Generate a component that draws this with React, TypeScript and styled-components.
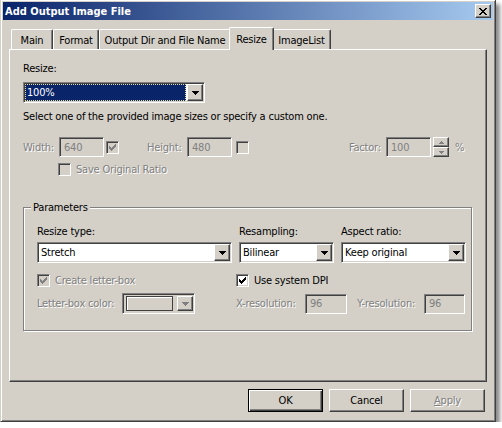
import styled, { createGlobalStyle, css } from "styled-components";

const GlobalStyle = createGlobalStyle`
  html, body {
    margin: 0;
    padding: 0;
    background: #ffffff;
  }
  body {
    font-family: Tahoma, "DejaVu Sans Condensed", "DejaVu Sans", sans-serif;
    font-size: 11px;
    line-height: 13px;
    letter-spacing: -0.2px;
    color: #000000;
  }
  * {
    box-sizing: border-box;
  }
`;

const raised = css`
  background: #d4d0c8;
  border: 1px solid;
  border-color: #ffffff #404040 #404040 #ffffff;
  box-shadow: inset -1px -1px 0 #808080;
`;

const sunken = css`
  border: 1px solid;
  border-color: #808080 #ffffff #ffffff #808080;
  box-shadow: inset 1px 1px 0 #404040, inset -1px -1px 0 #d4d0c8;
`;

const Window = styled.div`
  width: 496px;
  height: 422px;
  background: #d4d0c8;
  border: 1px solid;
  border-color: #d4d0c8 #404040 #404040 #d4d0c8;
  border-top: 0;
  box-shadow: inset 1px 1px 0 #ffffff, inset -1px -1px 0 #808080,
    4px 4px 4px rgba(0, 0, 0, 0.45);
  padding: 2px;
  display: flex;
  flex-direction: column;
`;

const TitleBar = styled.div`
  height: 18px;
  background: linear-gradient(to right, #0a246a, #a6caf0);
  display: flex;
  align-items: center;
  justify-content: space-between;
  padding: 0 2px 0 2px;
  color: #ffffff;
  font-weight: bold;
  letter-spacing: 0;
`;

const CloseButton = styled.div`
  ${raised};
  width: 16px;
  height: 14px;
  display: flex;
  align-items: center;
  justify-content: center;
`;

const Body = styled.div`
  padding: 7px 6px 0 6px;
  display: flex;
  flex-direction: column;
`;

const TabStrip = styled.div`
  height: 22px;
  display: flex;
  align-items: flex-end;
  padding-left: 2px;
`;

const Tab = styled.div<{ $w: number; $active?: boolean }>`
  flex-shrink: 0;
  width: ${(p) => p.$w}px;
  height: 20px;
  display: flex;
  align-items: center;
  justify-content: center;
  padding-top: 2px;
  background: #d4d0c8;
  border-left: 1px solid #ffffff;
  border-top: 1px solid #ffffff;
  border-right: 1px solid #404040;
  border-top-left-radius: 2px;
  border-top-right-radius: 2px;
  box-shadow: inset -1px 0 0 #808080;
  white-space: nowrap;
  ${(p) =>
    p.$active &&
    css`
      width: ${p.$w + 4}px;
      height: 23px;
      margin: 0 -2px -1px;
      padding-top: 0;
      position: relative;
      z-index: 1;
    `}
`;

const Panel = styled.div`
  width: 478px;
  height: 333px;
  border: 1px solid;
  border-color: #ffffff #404040 #404040 #ffffff;
  box-shadow: inset -1px -1px 0 #808080;
  padding: 12px 14px 0 13px;
  display: flex;
  flex-direction: column;
`;

const Label = styled.span<{ $disabled?: boolean; $w?: number }>`
  flex-shrink: 0;
  white-space: nowrap;
  ${(p) => p.$w !== undefined && `width: ${p.$w}px;`}
  color: ${(p) => (p.$disabled ? "#808080" : "#000000")};
  text-shadow: ${(p) => (p.$disabled ? "1px 1px 0 #ffffff" : "none")};
`;

const Combo = styled.div<{ $w?: number }>`
  ${sunken};
  width: ${(p) => (p.$w ? `${p.$w}px` : "100%")};
  height: 21px;
  background: #ffffff;
  padding: 1px;
  display: flex;
  align-items: stretch;
`;

const ComboValue = styled.div<{ $selected?: boolean }>`
  flex: 1;
  display: flex;
  align-items: center;
  padding-left: 2px;
  ${(p) =>
    p.$selected &&
    css`
      background: #0a246a;
      color: #ffffff;
      outline: 1px dotted #e8e0a0;
      outline-offset: -1px;
      margin-right: 1px;
    `}
`;

const DropButton = styled.div`
  ${raised};
  width: 16px;
  flex-shrink: 0;
  display: flex;
  align-items: center;
  justify-content: center;
`;

const Description = styled.div`
  margin-top: 7px;
`;

const Row = styled.div<{ $mt?: number; $h?: number }>`
  display: flex;
  align-items: center;
  margin-top: ${(p) => p.$mt ?? 0}px;
  height: ${(p) => p.$h ?? 13}px;
`;

const Spacer = styled.span<{ $w: number }>`
  flex-shrink: 0;
  width: ${(p) => p.$w}px;
`;

const Field = styled.div<{ $w: number }>`
  ${sunken};
  flex-shrink: 0;
  width: ${(p) => p.$w}px;
  height: 20px;
  background: #d4d0c8;
  color: #808080;
  padding-left: 4px;
  display: flex;
  align-items: center;
`;

const Box = styled.span<{ $disabled?: boolean }>`
  ${sunken};
  flex-shrink: 0;
  width: 13px;
  height: 13px;
  background: ${(p) => (p.$disabled ? "#d4d0c8" : "#ffffff")};
  display: inline-flex;
  align-items: center;
  justify-content: center;
`;

const Spinner = styled.div`
  flex-shrink: 0;
  width: 16px;
  height: 20px;
  display: flex;
  flex-direction: column;
`;

const SpinButton = styled.div`
  ${raised};
  flex: 1;
  display: flex;
  align-items: center;
  justify-content: center;
`;

const GroupBox = styled.div`
  position: relative;
  margin-top: 31px;
  width: 449px;
  border: 1px solid #808080;
  box-shadow: inset 1px 1px 0 #ffffff, 1px 1px 0 #ffffff;
  padding: 17px 4px 16px 13px;
`;

const GroupTitle = styled.span`
  position: absolute;
  top: -7px;
  left: 7px;
  padding: 0 2px;
  background: #d4d0c8;
`;

const Column = styled.div<{ $w: number }>`
  width: ${(p) => p.$w}px;
  display: flex;
  flex-direction: column;
  gap: 4px;
`;

const Columns = styled.div`
  display: flex;
  gap: 7px;
`;

const ColorCombo = styled.div`
  ${sunken};
  flex-shrink: 0;
  width: 73px;
  height: 21px;
  background: #d4d0c8;
  padding: 2px 1px 2px 3px;
  display: flex;
  gap: 4px;
`;

const Swatch = styled.div`
  flex: 1;
  border: 1px solid #404040;
  box-shadow: inset 1px 1px 0 #ffffff;
`;

const ButtonRow = styled.div`
  display: flex;
  justify-content: flex-end;
  gap: 6px;
  margin-top: 7px;
  padding-right: 2px;
`;

const Button = styled.button<{ $default?: boolean }>`
  width: 75px;
  height: 23px;
  font: inherit;
  letter-spacing: inherit;
  color: #000000;
  padding: 0;
  background: #d4d0c8;
  border: 1px solid;
  border-color: #ffffff #404040 #404040 #ffffff;
  box-shadow: inset -1px -1px 0 #808080;
  ${(p) =>
    p.$default &&
    css`
      border-color: #000000;
      box-shadow: inset 1px 1px 0 #ffffff, inset -1px -1px 0 #404040,
        inset -2px -2px 0 #808080;
    `}
  &:disabled {
    color: #808080;
    text-shadow: 1px 1px 0 #ffffff;
  }
`;

const Underline = styled.span`
  text-decoration: underline;
`;

function DownArrow({ color = "#000000" }: { color?: string }) {
  return (
    <svg width="7" height="4" viewBox="0 0 7 4" shapeRendering="crispEdges">
      <path
        fill={color}
        d="M0 0h7v1H0zM1 1h5v1H1zM2 2h3v1H2zM3 3h1v1H3z"
      />
    </svg>
  );
}

function SmallArrow({ up }: { up?: boolean }) {
  return (
    <svg
      width="5"
      height="3"
      viewBox="0 0 5 3"
      shapeRendering="crispEdges"
      style={{ transform: up ? "rotate(180deg)" : undefined }}
    >
      <path fill="#808080" d="M0 0h5v1H0zM1 1h3v1H1zM2 2h1v1H2z" />
    </svg>
  );
}

function CheckMark({ color }: { color: string }) {
  return (
    <svg width="7" height="7" viewBox="0 0 7 7" shapeRendering="crispEdges">
      <path
        fill={color}
        d="M6 0h1v1H6zM5 1h2v1H5zM0 2h1v1H0zM4 2h3v1H4zM0 3h2v1H0zM3 3h3v1H3zM0 4h5v1H0zM1 5h3v1H1zM2 6h1v1H2z"
      />
    </svg>
  );
}

function CloseGlyph() {
  return (
    <svg width="8" height="7" viewBox="0 0 8 7" shapeRendering="crispEdges">
      <path
        fill="#000000"
        d="M0 0h2v1H0zM6 0h2v1H6zM1 1h2v1H1zM5 1h2v1H5zM2 2h4v1H2zM3 3h2v1H3zM2 4h4v1H2zM1 5h2v1H1zM5 5h2v1H5zM0 6h2v1H0zM6 6h2v1H6z"
      />
    </svg>
  );
}

function CheckBox({
  checked,
  disabled,
}: {
  checked?: boolean;
  disabled?: boolean;
}) {
  return (
    <Box $disabled={disabled}>
      {checked && <CheckMark color={disabled ? "#808080" : "#000000"} />}
    </Box>
  );
}

const tabs = [
  { label: "Main", w: 42 },
  { label: "Format", w: 46 },
  { label: "Output Dir and File Name", w: 132 },
  { label: "Resize", w: 41, active: true },
  { label: "ImageList", w: 59 },
];

export default function App() {
  return (
    <>
      <GlobalStyle />
      <Window>
        <TitleBar>
          <span>Add Output Image File</span>
          <CloseButton>
            <CloseGlyph />
          </CloseButton>
        </TitleBar>
        <Body>
          <TabStrip>
            {tabs.map((t) => (
              <Tab key={t.label} $w={t.w} $active={t.active}>
                {t.label}
              </Tab>
            ))}
          </TabStrip>
          <Panel>
            <Label>Resize:</Label>
            <Combo $w={182} style={{ marginTop: 7 }}>
              <ComboValue $selected>100%</ComboValue>
              <DropButton>
                <DownArrow />
              </DropButton>
            </Combo>
            <Description>
              Select one of the provided image sizes or specify a custom one.
            </Description>

            {/* Width / Height / Factor */}
            <Row $mt={14} $h={20}>
              <Label $disabled $w={36}>
                Width:
              </Label>
              <Field $w={45}>640</Field>
              <Spacer $w={2} />
              <CheckBox checked disabled />
              <Spacer $w={28} />
              <Label $disabled $w={40}>
                Height:
              </Label>
              <Field $w={45}>480</Field>
              <Spacer $w={4} />
              <CheckBox disabled />
              <Spacer $w={100} />
              <Label $disabled $w={37}>
                Factor:
              </Label>
              <Field $w={45}>100</Field>
              <Spacer $w={2} />
              <Spinner>
                <SpinButton>
                  <SmallArrow up />
                </SpinButton>
                <SpinButton>
                  <SmallArrow />
                </SpinButton>
              </Spinner>
              <Spacer $w={6} />
              <Label $disabled>%</Label>
            </Row>
            <Row $mt={6}>
              <Spacer $w={35} />
              <CheckBox disabled />
              <Spacer $w={5} />
              <Label $disabled>Save Original Ratio</Label>
            </Row>

            {/* Parameters */}
            <GroupBox>
              <GroupTitle>Parameters</GroupTitle>
              <Columns>
                <Column $w={195}>
                  <Label>Resize type:</Label>
                  <Combo>
                    <ComboValue>Stretch</ComboValue>
                    <DropButton>
                      <DownArrow />
                    </DropButton>
                  </Combo>
                </Column>
                <Column $w={95}>
                  <Label>Resampling:</Label>
                  <Combo>
                    <ComboValue>Bilinear</ComboValue>
                    <DropButton>
                      <DownArrow />
                    </DropButton>
                  </Combo>
                </Column>
                <Column $w={125}>
                  <Label>Aspect ratio:</Label>
                  <Combo>
                    <ComboValue>Keep original</ComboValue>
                    <DropButton>
                      <DownArrow />
                    </DropButton>
                  </Combo>
                </Column>
              </Columns>
              <Row $mt={11}>
                <CheckBox checked disabled />
                <Spacer $w={5} />
                <Label $disabled $w={181}>
                  Create letter-box
                </Label>
                <CheckBox checked />
                <Spacer $w={5} />
                <Label>Use system DPI</Label>
              </Row>
              <Row $mt={6} $h={21}>
                <Label $disabled $w={85}>
                  Letter-box color:
                </Label>
                <ColorCombo>
                  <Swatch />
                  <DropButton>
                    <DownArrow color="#808080" />
                  </DropButton>
                </ColorCombo>
                <Spacer $w={41} />
                <Label $disabled $w={69}>
                  X-resolution:
                </Label>
                <Field $w={42}>96</Field>
                <Spacer $w={10} />
                <Label $disabled $w={67}>
                  Y-resolution:
                </Label>
                <Field $w={41}>96</Field>
              </Row>
            </GroupBox>
          </Panel>
          <ButtonRow>
            <Button $default>OK</Button>
            <Button>Cancel</Button>
            <Button disabled>
              <Underline>A</Underline>pply
            </Button>
          </ButtonRow>
        </Body>
      </Window>
    </>
  );
}
